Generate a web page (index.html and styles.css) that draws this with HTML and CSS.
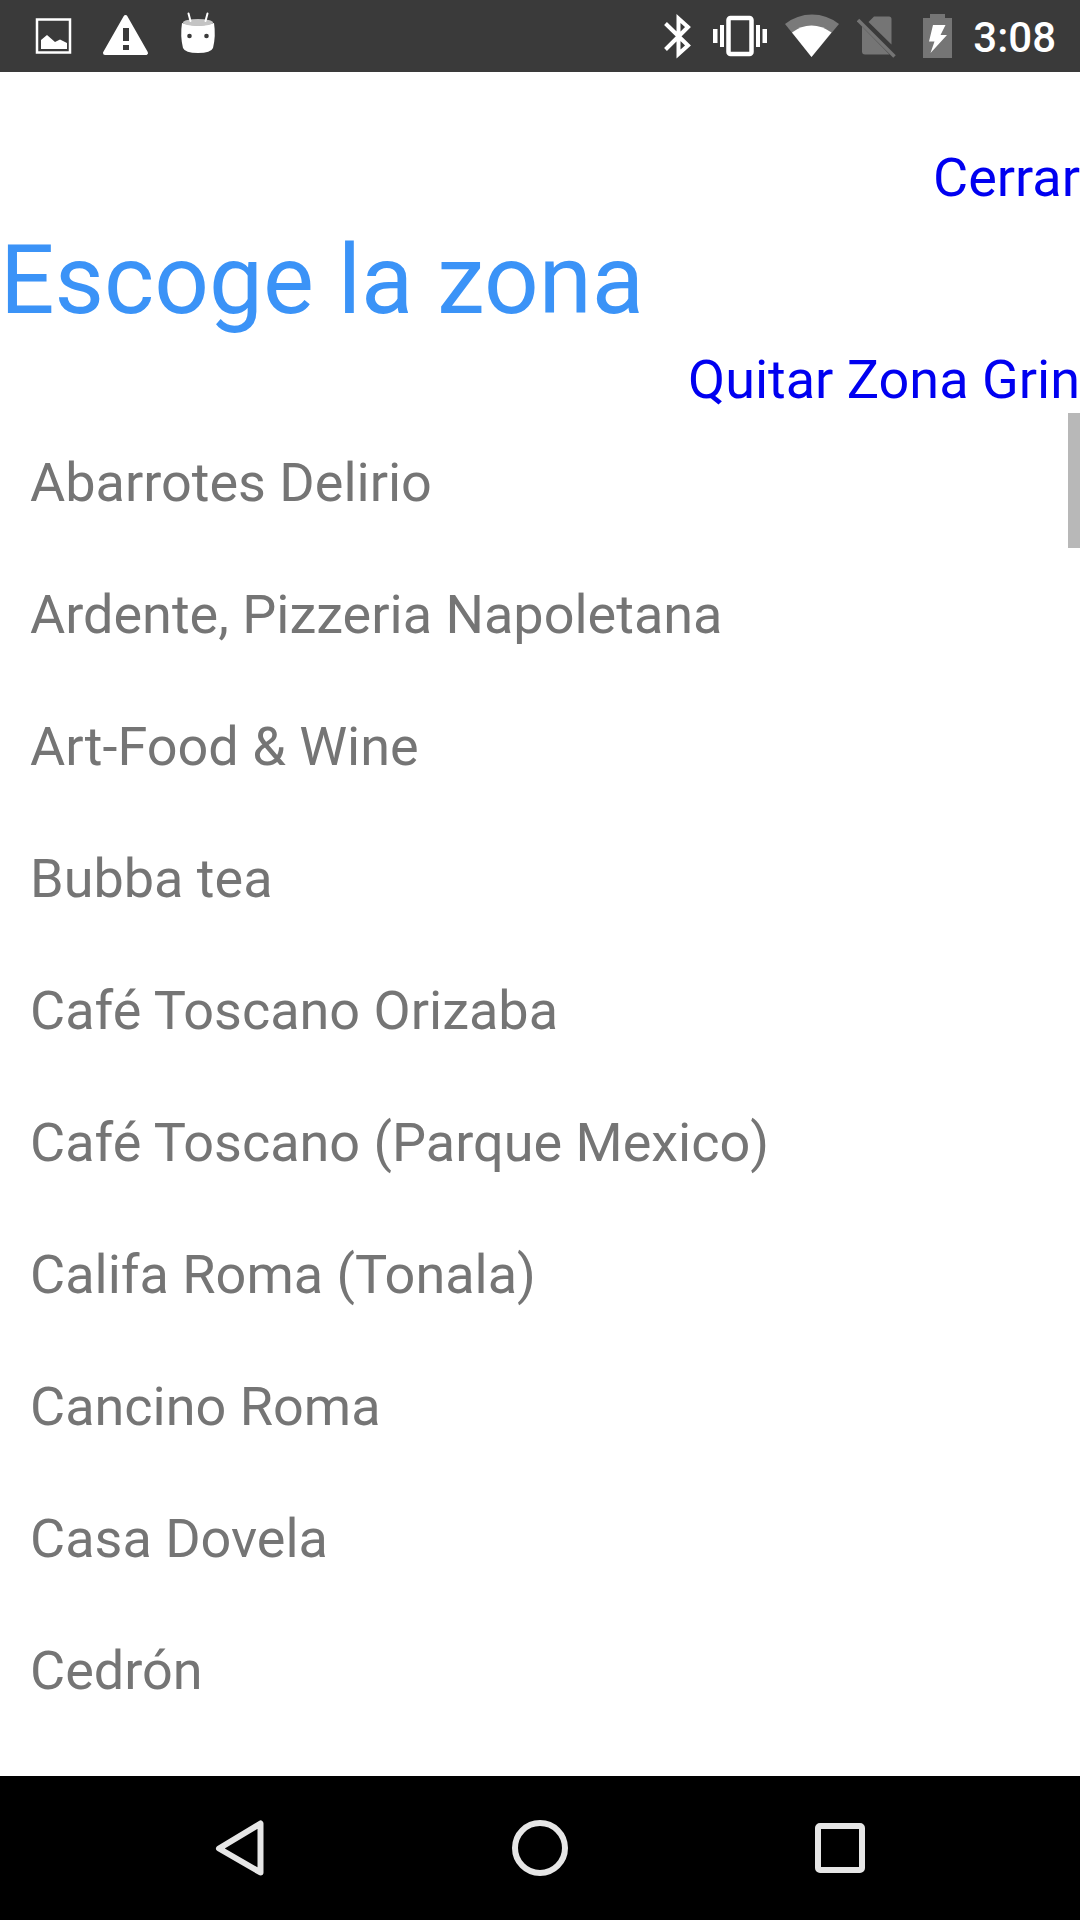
FILE: index.html
```html
<!DOCTYPE html>
<html lang="es">
    <head>
        <meta charset="utf-8">
        <title>Escoge la zona</title>
        <link rel="stylesheet" href="styles.css">
    </head>
    <body>

        <!-- Status bar -->
        <div class="status-bar">
            <div class="notifications">
                <svg width="72" height="72" viewBox="18 0 72 72">
                    <rect x="37" y="19.500" width="33" height="33" fill="none" stroke="#fff" stroke-width="2.500"/>
                    <path d="M41 49V40L47 35L55 42L60 39.500L67 43V49Z" fill="#fff"/>
                </svg>
                <svg width="72" height="72" viewBox="90 0 72 72">
                    <path d="M125.500 17L146 53H105Z" fill="#fff" stroke="#fff" stroke-width="4" stroke-linejoin="round"/>
                    <path d="M123 28h6v13h-6zM123 45h6v5h-6z" fill="#3a3a3a"/>
                </svg>
                <svg width="72" height="72" viewBox="162 0 72 72">
                    <path d="M182 23Q198 28 214 23Q216 36 213 48Q211 53 198 53Q185 53 183 48Q180 36 182 23Z" fill="#fff"/>
                    <ellipse cx="198" cy="22.500" rx="15" ry="3.500" fill="#c4c4c4"/>
                    <path d="M188.500 13.500L190.500 21M207.500 13.500L205.500 21" stroke="#fff" stroke-width="2" stroke-linecap="round"/>
                    <circle cx="189.500" cy="36" r="2.300" fill="#3a3a3a"/>
                    <circle cx="206.500" cy="36" r="2.300" fill="#3a3a3a"/>
                </svg>
            </div>
            <div class="system">
                <svg width="54" height="72" viewBox="641 0 54 72">
                    <path d="M665.500 23.500L688 45.500L678.500 54V18.500L688 27L665.500 49.500" fill="none" stroke="#fff" stroke-width="4"/>
                </svg>
                <svg width="54" height="72" viewBox="713 0 54 72">
                    <rect x="728.500" y="18" width="23" height="36" rx="2" fill="none" stroke="#fff" stroke-width="4.500"/>
                    <path d="M713 29h4.500v14H713zM720 25h4v22h-4zM756 25h4v22h-4zM762.500 29h4.500v14h-4.500z" fill="#fff"/>
                </svg>
                <svg width="54" height="72" viewBox="785 0 54 72">
                    <path d="M811.500 57L785 24Q797 14.500 812 14.500Q827 14.500 839 24Z" fill="#7a7a7a"/>
                    <path d="M811.500 57L792 32.500Q801 25.500 811.500 25.500Q822 25.500 831.500 32.500Z" fill="#fff"/>
                </svg>
                <svg width="48" height="72" viewBox="857 0 48 72">
                    <path d="M868.500 22L874 16.500H889Q891.500 16.500 891.500 19V44.500ZM862 26.500L889.500 54.500H865Q862 54.500 862 51.500Z" fill="#757575"/>
                    <path d="M858 20L894.500 56.500" stroke="#757575" stroke-width="3.500"/>
                </svg>
                <svg width="30" height="72" viewBox="923 0 30 72">
                    <path d="M923 18h7v-4h15v4h7v40h-29z" fill="#757575"/>
                    <path d="M933 25H945.500L940.500 35H947L930.500 53L934.500 41.500H929Z" fill="#fff"/>
                </svg>
                <span class="time">3:08</span>
            </div>
        </div>

        <!-- Zone picker -->
        <div class="main">
            <a class="action" href="#">Cerrar</a>
            <h1>Escoge la zona</h1>
            <a class="action" href="#">Quitar Zona Grin</a>

            <div class="zones">
                <ul class="zone-list">
                    <li>Abarrotes Delirio</li>
                    <li>Ardente, Pizzeria Napoletana</li>
                    <li>Art-Food &amp; Wine</li>
                    <li>Bubba tea</li>
                    <li>Café Toscano Orizaba</li>
                    <li>Café Toscano (Parque Mexico)</li>
                    <li>Califa Roma (Tonala)</li>
                    <li>Cancino Roma</li>
                    <li>Casa Dovela</li>
                    <li>Cedrón</li>
                </ul>
                <div class="scroll-thumb"></div>
            </div>
        </div>

        <!-- Navigation bar -->
        <div class="nav-bar">
            <button type="button" aria-label="Atrás">
                <svg width="72" height="72" viewBox="204 1812 72 72">
                    <path d="M219 1848.500L260.500 1823.500V1872.500Z"/>
                </svg>
            </button>
            <button type="button" aria-label="Inicio">
                <svg width="72" height="72" viewBox="504 1812 72 72">
                    <circle cx="540" cy="1848" r="25"/>
                </svg>
            </button>
            <button type="button" aria-label="Recientes">
                <svg width="72" height="72" viewBox="804 1812 72 72">
                    <rect x="818" y="1826" width="44" height="44" rx="2"/>
                </svg>
            </button>
        </div>

    </body>
</html>
```

FILE: styles.css
```css
/* Layout for the entire page */
body {
    display: flex;
    flex-direction: column;
    margin: 0;
    height: 100vh;
    background-color: #fff;
    font-family: Roboto, sans-serif;
}

svg {
    display: block;
}

/* Status bar */
.status-bar {
    display: flex;
    justify-content: space-between;
    height: 72px;
    padding: 0 24px 0 18px;
    background-color: #3a3a3a;
}

.notifications {
    display: flex;
}

.system {
    display: flex;
    gap: 18px;
}

.time {
    min-width: 85px;
    color: #fff;
    font-size: 42px;
    font-weight: 500;
    line-height: 76px;
    text-align: right;
}

/* Zone picker */
.main {
    display: flex;
    flex: 1; /* Take up the space between both bars */
    flex-direction: column;
    min-height: 0;
    padding-top: 73px;
}

.action {
    align-self: flex-end;
    color: #0000f0;
    font-size: 54px;
    line-height: 66px;
    text-decoration: none;
}

h1 {
    margin: 0;
    padding-top: 2px;
    color: #3b93f7;
    font-size: 96px;
    font-weight: 400;
    line-height: 134px;
}

/* List of zones */
.zones {
    position: relative;
    flex: 1;
    min-height: 0;
    overflow: hidden;
}

.zone-list {
    margin: 0;
    padding: 0;
    list-style: none;
}

.zone-list li {
    padding: 37px 30px 29px;
    color: #757575;
    font-size: 54px;
    line-height: 66px;
}

/* Scroll indicator over the list */
.scroll-thumb {
    position: absolute;
    top: 0;
    right: 0;
    width: 12px;
    height: 135px;
    background-color: #b8b8b8;
}

/* Navigation bar */
.nav-bar {
    display: flex;
    height: 144px;
    padding: 0 90px;
    background-color: #000;
}

.nav-bar button {
    display: flex;
    flex: 1;
    align-items: center;
    justify-content: center;
    padding: 0;
    border: none;
    background: none;
    cursor: pointer;
}

.nav-bar svg {
    fill: none;
    stroke: #e6e6e6;
    stroke-width: 6px;
    stroke-linejoin: round;
}
```
